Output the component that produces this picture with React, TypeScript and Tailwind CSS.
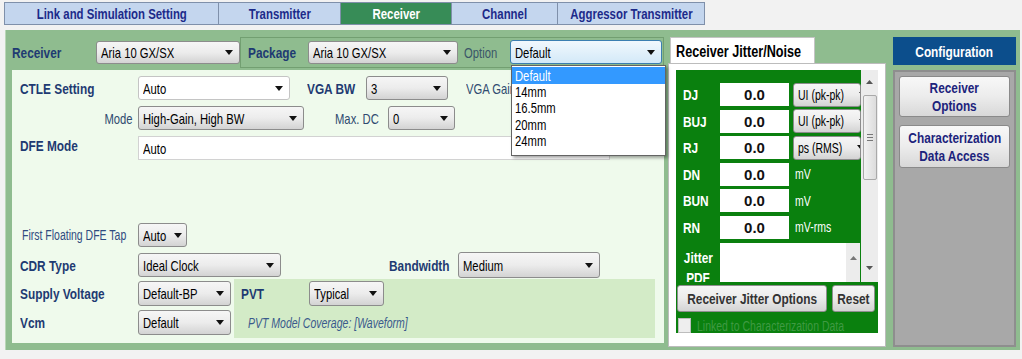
import React from "react";

const F = "font-['Liberation_Sans',Arial,sans-serif]";
const LB = "font-bold text-[15px] text-[#1e3a72] leading-none whitespace-nowrap";
const LN = "text-[15px] text-[#2f4b70] leading-none whitespace-nowrap";

function T({
  children,
  b,
  o = "l",
  cls = "",
}: {
  children: React.ReactNode;
  b?: boolean;
  o?: "l" | "c" | "r";
  cls?: string;
}) {
  const origin = o === "c" ? "origin-center" : o === "r" ? "origin-right" : "origin-left";
  const s = b ? "scale-x-[0.79]" : "scale-x-[0.75]";
  return <span className={`inline-block whitespace-nowrap ${origin} ${s} ${cls}`}>{children}</span>;
}

const Arrow = () => (
  <svg width="8" height="5" viewBox="0 0 8 5" className="shrink-0">
    <path d="M0 0H8L4 5Z" fill="#111" />
  </svg>
);

type SelProps = { text: string; cls: string; variant?: "grad" | "white" | "focus"; textCls?: string };
function Sel({ text, cls, variant = "grad", textCls = "text-[15px]" }: SelProps) {
  const v =
    variant === "white"
      ? "bg-white border-[#c4c4c4]"
      : variant === "focus"
      ? "bg-linear-to-b from-[#f1f8fd] to-[#d3e9f8] border-[#3c7fb1]"
      : "bg-linear-to-b from-[#f6f6f6] via-[#ececec] to-[#d3d3d3] border-[#8c8c8c]";
  return (
    <div
      className={`flex shrink-0 items-center justify-between border rounded-[3px] pl-[4px] pr-[6px] overflow-hidden ${v} ${cls}`}
    >
      <span className={`leading-none text-black ${textCls}`}>
        <T>{text}</T>
      </span>
      <Arrow />
    </div>
  );
}

function Tab({ w, label, active }: { w: string; label: string; active?: boolean }) {
  return (
    <div
      className={`flex items-center justify-center h-[23px] border border-[#7f90aa] -ml-px text-[15px] font-bold leading-none ${w} ${
        active ? "bg-[#378c57] text-white" : "bg-[#c4d6ee] text-[#1c2a8a]"
      }`}
    >
      <span className="inline-block whitespace-nowrap origin-center scale-x-[0.76]">{label}</span>
    </div>
  );
}

function JRow({ label, unit }: { label: string; unit: React.ReactNode }) {
  return (
    <div className="flex items-center h-[23px] shrink-0">
      <div className="w-[44px] pl-[7px] font-bold text-[15px] text-white leading-none">
        <T b>{label}</T>
      </div>
      <div className="w-[69px] h-[23px] bg-white flex items-center justify-center font-bold text-[15px] text-[#111] leading-none">
        0.0
      </div>
      <div className="ml-[4px]">{unit}</div>
    </div>
  );
}

const UnitSel = ({ t }: { t: string }) => (
  <Sel text={t} cls="w-[68px] h-[24px] pl-[3px] pr-[4px]" textCls="text-[14px]" />
);
const UnitTxt = ({ t }: { t: string }) => (
  <span className="pl-[2px] text-[14px] text-white leading-none">
    <T>{t}</T>
  </span>
);

function CfgBtn({ l1, l2, cls }: { l1: string; l2: string; cls: string }) {
  return (
    <div
      className={`mx-[4px] flex flex-col items-center justify-center rounded-[3px] border border-[#8a8a8a] bg-linear-to-b from-[#f8f8f8] via-[#ececec] to-[#d8d8d8] font-bold text-[15px] text-[#1c237c] leading-[18px] ${cls}`}
    >
      <T b o="c">{l1}</T>
      <T b o="c">{l2}</T>
    </div>
  );
}

const JBtn = ({ t, cls }: { t: string; cls: string }) => (
  <div
    className={`h-[27px] shrink-0 rounded-[3px] border border-[#8f8f8f] bg-linear-to-b from-[#f6f6f6] via-[#ebebeb] to-[#d4d4d4] flex items-center justify-center font-bold text-[15px] text-[#333] leading-none ${cls}`}
  >
    <T b o="c">{t}</T>
  </div>
);

export default function App() {
  return (
    <div className={`${F} w-[1022px] h-[359px] bg-[#f2f2f2] overflow-hidden`}>
      {/* tab strip */}
      <div className="flex pl-[5px] pt-[2px] h-[26px]">
        <Tab w="w-[215px]" label="Link and Simulation Setting" />
        <Tab w="w-[123px]" label="Transmitter" />
        <Tab w="w-[112px]" label="Receiver" active />
        <Tab w="w-[107px]" label="Channel" />
        <Tab w="w-[148px]" label="Aggressor Transmitter" />
      </div>

      {/* main */}
      <div className="mt-[4px] ml-[5px] w-[1015px] h-[320px] bg-[#8fbc8f] border-l border-[#b9d6b7] flex pl-[6px] pt-[5px] pb-[3px]">
        {/* left column */}
        <div className="w-[652px] flex flex-col relative">
          <div className="h-[34px] flex items-center">
            <div className={`w-[86px] ${LB}`}>
              <T b>Receiver</T>
            </div>
            <Sel text="Aria 10 GX/SX" cls="w-[144px] h-[23px]" />
            <div className="h-[31px] flex items-center border border-[#729f71] pl-[7px] pr-[1px]">
              <div className={`w-[60px] ${LB}`}>
                <T b>Package</T>
              </div>
              <Sel text="Aria 10 GX/SX" cls="w-[150px] h-[23px]" />
              <div className={`ml-[6px] w-[46px] text-[#3a5668] ${LN}`}>
                <T>Option</T>
              </div>
              <Sel text="Default" variant="focus" cls="w-[152px] h-[24px]" />
            </div>
          </div>

          {/* inner panel */}
          <div className="mt-[1px] h-[273px] bg-[#effaec] pl-[8px] pt-[6px] flex flex-col">
            <div className="flex items-center h-[24px]">
              <div className={`w-[118px] ${LB}`}>
                <T b>CTLE Setting</T>
              </div>
              <Sel text="Auto" variant="white" cls="w-[152px] h-[24px]" />
              <div className={`ml-[17px] w-[59px] ${LB}`}>
                <T b>VGA BW</T>
              </div>
              <Sel text="3" cls="w-[82px] h-[24px]" />
              <div className={`ml-[18px] w-[45px] overflow-hidden ${LN}`}>
                <T>VGA Gain</T>
              </div>
            </div>
            <div className="flex items-center h-[24px] mt-[6px]">
              <div className={`w-[118px] pr-[5px] text-right ${LN}`}>
                <T o="r">Mode</T>
              </div>
              <Sel text="High-Gain, High BW" cls="w-[166px] h-[24px]" />
              <div className={`ml-[31px] w-[53px] ${LN}`}>
                <T>Max. DC</T>
              </div>
              <Sel text="0" cls="w-[67px] h-[24px]" />
            </div>
            <div className="flex items-start h-[24px] mt-[6px]">
              <div className={`w-[118px] pt-[2px] ${LB}`}>
                <T b>DFE Mode</T>
              </div>
              <div className="w-[472px] h-[24px] bg-white border border-[#d2d2d2] flex items-center pl-[4px] text-[15px] leading-none text-black">
                <T>Auto</T>
              </div>
            </div>
            <div className="flex items-center h-[24px] mt-[63px]">
              <div className="w-[118px] pl-[2px] text-[14px] text-[#2f4b80] leading-none">
                <T>First Floating DFE Tap</T>
              </div>
              <Sel text="Auto" cls="w-[49px] h-[24px]" />
            </div>
            <div className="flex items-center h-[26px] mt-[5px]">
              <div className={`w-[118px] ${LB}`}>
                <T b>CDR Type</T>
              </div>
              <Sel text="Ideal Clock" cls="w-[143px] h-[24px]" />
              <div className={`ml-[108px] w-[69px] ${LB}`}>
                <T b>Bandwidth</T>
              </div>
              <Sel text="Medium" cls="w-[142px] h-[26px]" />
            </div>
            <div className="flex mt-[1px]">
              <div className="w-[214px] pt-[2px] flex flex-col gap-[4px]">
                <div className="flex items-center h-[25px]">
                  <div className={`w-[118px] ${LB}`}>
                    <T b>Supply Voltage</T>
                  </div>
                  <Sel text="Default-BP" cls="w-[93px] h-[25px]" />
                </div>
                <div className="flex items-center h-[25px]">
                  <div className={`w-[118px] ${LB}`}>
                    <T b>Vcm</T>
                  </div>
                  <Sel text="Default" cls="w-[93px] h-[25px]" />
                </div>
              </div>
              <div className="w-[421px] h-[59px] bg-[#d3ebc7] pl-[7px] pt-[2px]">
                <div className="flex items-center h-[25px]">
                  <div className={`w-[68px] ${LB}`}>
                    <T b>PVT</T>
                  </div>
                  <Sel text="Typical" cls="w-[75px] h-[25px]" />
                </div>
                <div className="mt-[10px] pl-[7px] italic text-[14px] text-[#3a5a8c] leading-none">
                  <T>PVT Model Coverage: [Waveform]</T>
                </div>
              </div>
            </div>
          </div>

          {/* open dropdown list */}
          <div className="absolute left-[499px] top-[30px] w-[155px] h-[91px] bg-white border border-[#646464] shadow-[2px_2px_3px_rgba(0,0,0,0.35)] z-10 pt-[1px] text-[15px]">
            <div className="h-[17px] bg-[#3399ff] text-white leading-[17px] pl-[3px]">
              <T>Default</T>
            </div>
            <div className="h-[16.3px] leading-[16px] pl-[3px] text-black">
              <T>14mm</T>
            </div>
            <div className="h-[16.3px] leading-[16px] pl-[3px] text-black">
              <T>16.5mm</T>
            </div>
            <div className="h-[16.3px] leading-[16px] pl-[3px] text-black">
              <T>20mm</T>
            </div>
            <div className="h-[16.3px] leading-[16px] pl-[3px] text-black">
              <T>24mm</T>
            </div>
          </div>
        </div>

        {/* middle tab control */}
        <div className="ml-[2px] w-[220px] flex flex-col">
          <div className="ml-[4px] mt-[2px] w-[145px] h-[26px] bg-white border border-b-0 border-[#c4c4c4] pl-[5px] pt-[6px] font-bold text-[16px] text-black leading-none">
            <T b>Receiver Jitter/Noise</T>
          </div>
          <div className="ml-[2px] w-[218px] h-[284px] bg-white border border-[#bcbcbc] pl-[7px] pt-[6px]">
            <div className="w-[202px] bg-[#0a800e]">
              <div className="h-[212px] flex">
                <div className="w-[185px] h-[212px] overflow-hidden pt-[13px] flex flex-col gap-[3.6px]">
                  <JRow label="DJ" unit={<UnitSel t="UI (pk-pk)" />} />
                  <JRow label="BUJ" unit={<UnitSel t="UI (pk-pk)" />} />
                  <JRow label="RJ" unit={<UnitSel t="ps (RMS)" />} />
                  <JRow label="DN" unit={<UnitTxt t="mV" />} />
                  <JRow label="BUN" unit={<UnitTxt t="mV" />} />
                  <JRow label="RN" unit={<UnitTxt t="mV-rms" />} />
                  <div className="flex items-start h-[45px] shrink-0">
                    <div className="w-[44px] pt-[5px] flex flex-col items-center font-bold text-[15px] text-white leading-[20px]">
                      <T b o="c">Jitter</T>
                      <T b o="c">PDF</T>
                    </div>
                    <div className="w-[140px] h-[45px] bg-white flex justify-end">
                      <div className="w-[14px] h-full bg-[#ececec] flex justify-center pt-[13px]">
                        <svg width="7" height="4" viewBox="0 0 7 4">
                          <path d="M0 4H7L3.5 0Z" fill="#777" />
                        </svg>
                      </div>
                    </div>
                  </div>
                </div>
                {/* scrollbar */}
                <div className="w-[17px] h-[212px] bg-[#ececec] flex flex-col items-center">
                  <svg width="7" height="4" viewBox="0 0 7 4" className="mt-[10px]">
                    <path d="M0 4H7L3.5 0Z" fill="#555" />
                  </svg>
                  <div className="mt-[11px] w-[14px] h-[85px] bg-linear-to-r from-[#f2f2f2] to-[#dcdcdc] border border-[#a9a9a9] rounded-[2px] flex flex-col items-center justify-center gap-[2px]">
                    <div className="w-[6px] h-px bg-[#777]" />
                    <div className="w-[6px] h-px bg-[#777]" />
                    <div className="w-[6px] h-px bg-[#777]" />
                  </div>
                  <svg width="7" height="4" viewBox="0 0 7 4" className="mt-[86px]">
                    <path d="M0 0H7L3.5 4Z" fill="#555" />
                  </svg>
                </div>
              </div>
              <div className="h-[51px] pt-[3px]">
                <div className="flex">
                  <JBtn t="Receiver Jitter Options" cls="ml-[1px] w-[150px]" />
                  <JBtn t="Reset" cls="ml-[5px] w-[43px]" />
                </div>
                <div className="mt-[6px] flex items-center">
                  <div className="ml-[2px] shrink-0 w-[13px] h-[15px] bg-[#eeeeee] border border-[#bdbdbd]" />
                  <span className="ml-[6px] min-w-0 text-[14px] text-[#3f9a43] leading-none">
                    <T>Linked to Characterization Data</T>
                  </span>
                </div>
              </div>
            </div>
          </div>
        </div>

        {/* configuration column */}
        <div className="ml-[7px] w-[123px] flex flex-col">
          <div className="mt-[2px] h-[28px] bg-[#0c4e8c] flex items-center justify-center font-bold text-[15px] text-white leading-none">
            <T b o="c">Configuration</T>
          </div>
          <div className="mt-[5px] h-[277px] bg-[#a8a8a8] border-2 border-[#8e8e8e] pt-[4px]">
            <CfgBtn l1="Receiver" l2="Options" cls="h-[41px]" />
            <CfgBtn l1="Characterization" l2="Data Access" cls="h-[43px] mt-[8px]" />
          </div>
        </div>
      </div>
    </div>
  );
}
